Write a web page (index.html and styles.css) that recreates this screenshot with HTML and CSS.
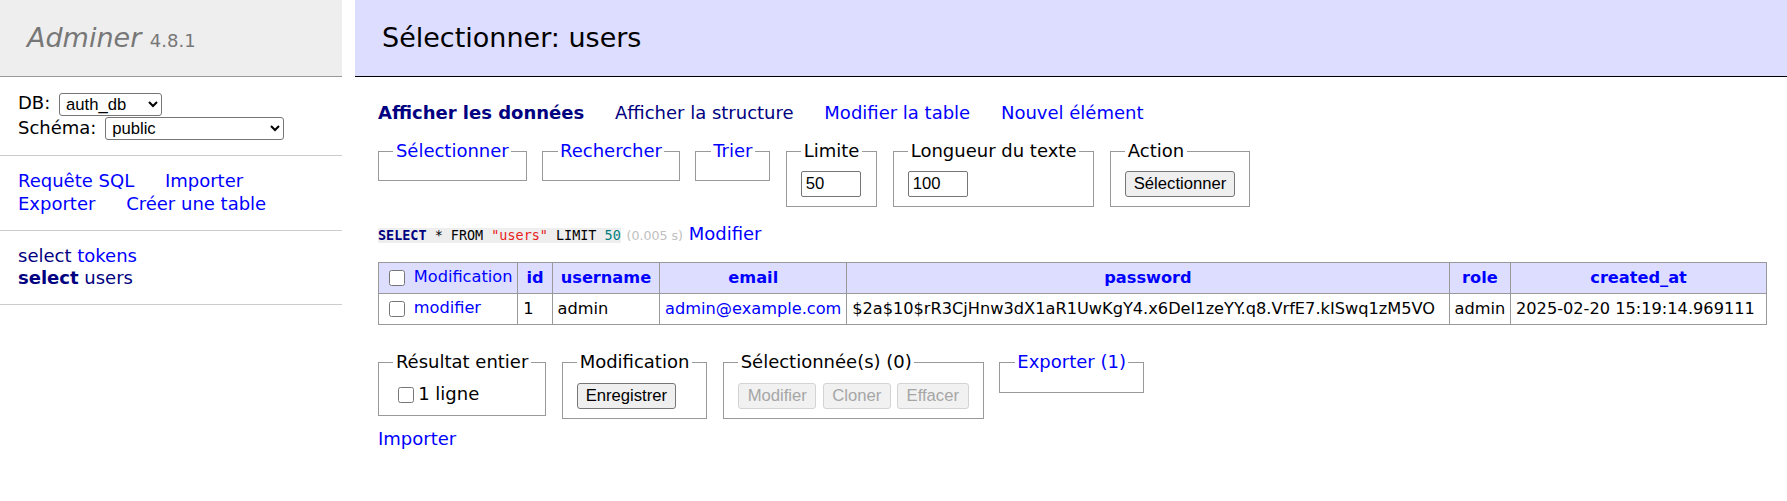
FILE: index.html
```html
<!DOCTYPE html>
<html lang="fr">
<head>
<meta charset="utf-8">
<title>Sélectionner: users - auth_db - Adminer</title>
<link rel="stylesheet" href="styles.css">
</head>
<body>
<div class="page">
  <aside class="menu">
    <h1 class="brand"><a class="brand-link" href="#">Adminer</a> <span class="version">4.8.1</span></h1>
    <p class="menu-block dbs">DB: <select class="sel sel-db"><option>auth_db</option></select><br>Schéma: <select class="sel sel-ns"><option>public</option></select></p>
    <p class="menu-block menu-links"><a href="#">Requête SQL</a> <a href="#">Importer</a><br><a href="#">Exporter</a> <a href="#">Créer une table</a></p>
    <ul class="menu-block tables">
      <li><a class="visited" href="#">select</a> <a href="#">tokens</a></li>
      <li><a class="visited active" href="#">select</a> <a class="visited" href="#">users</a></li>
    </ul>
  </aside>
  <main class="content">
    <h2 class="title">Sélectionner: users</h2>
    <p class="links"><a class="visited active" href="#">Afficher les données</a> <a class="visited" href="#">Afficher la structure</a> <a href="#">Modifier la table</a> <a href="#">Nouvel élément</a></p>
    <form class="filters">
      <fieldset class="fs"><legend class="lg"><a href="#">Sélectionner</a></legend></fieldset>
      <fieldset class="fs"><legend class="lg"><a href="#">Rechercher</a></legend></fieldset>
      <fieldset class="fs"><legend class="lg"><a href="#">Trier</a></legend></fieldset>
      <fieldset class="fs"><legend class="lg">Limite</legend><input class="num" type="text" value="50"></fieldset>
      <fieldset class="fs"><legend class="lg">Longueur du texte</legend><input class="num" type="text" value="100"></fieldset>
      <fieldset class="fs"><legend class="lg">Action</legend><button class="btn" type="button">Sélectionner</button></fieldset>
    </form>
    <p class="query"><code class="sql"><a class="kw" href="#">SELECT</a> * FROM <span class="quo">"users"</span> LIMIT <span class="numlit">50</span></code> <span class="time">(0.005 s)</span> <a href="#">Modifier</a></p>
    <table class="data">
      <thead>
        <tr>
          <td class="w-sel"><input class="cb" type="checkbox"> <a href="#">Modification</a></td>
          <th class="w-id"><a href="#">id</a></th>
          <th class="w-user"><a href="#">username</a></th>
          <th class="w-email"><a href="#">email</a></th>
          <th class="w-pass"><a href="#">password</a></th>
          <th class="w-role"><a href="#">role</a></th>
          <th class="w-date"><a href="#">created_at</a></th>
        </tr>
      </thead>
      <tbody>
        <tr>
          <td><input class="cb" type="checkbox"> <a href="#">modifier</a></td>
          <td>1</td>
          <td>admin</td>
          <td><a href="#">admin@example.com</a></td>
          <td>$2a$10$rR3CjHnw3dX1aR1UwKgY4.x6DeI1zeYY.q8.VrfE7.kISwq1zM5VO</td>
          <td>admin</td>
          <td>2025-02-20 15:19:14.969111</td>
        </tr>
      </tbody>
    </table>
    <div class="footer">
      <fieldset class="fs fs-foot"><legend class="lg">Résultat entier</legend><label class="all"><input class="cb cb-all" type="checkbox">1 ligne</label></fieldset>
      <fieldset class="fs fs-foot"><legend class="lg">Modification</legend><button class="btn" type="button">Enregistrer</button></fieldset>
      <fieldset class="fs fs-foot"><legend class="lg">Sélectionnée(s) (0)</legend><div class="btn-row"><button class="btn" type="button" disabled>Modifier</button><button class="btn" type="button" disabled>Cloner</button><button class="btn" type="button" disabled>Effacer</button></div></fieldset>
      <fieldset class="fs fs-foot"><legend class="lg"><a href="#">Exporter (1)</a></legend></fieldset>
    </div>
    <div class="import"><a href="#">Importer</a></div>
  </main>
</div>
</body>
</html>
```

FILE: styles.css
```css
html {
  background: #fff;
}

body {
  margin: 0;
  color: #000;
  background: #fff;
  font: 18px/1.25 "DejaVu Sans", Verdana, sans-serif;
}

a {
  color: #00f;
  text-decoration: none;
}

a.visited {
  color: #000080;
}

.active {
  font-weight: bold;
}

.page {
  display: flex;
  align-items: flex-start;
  min-height: 501px;
}

/* ---------- sidebar ---------- */
.menu {
  flex: 0 0 342px;
  width: 342px;
}

.brand {
  margin: 0;
  padding: 21px 27px;
  height: 34px;
  font-size: 27px;
  line-height: 34px;
  font-weight: normal;
  color: #777;
  background: #eee;
  border-bottom: 1px solid #999;
}

.brand-link {
  color: #777;
  font-style: italic;
}

.version {
  color: #777;
  font-size: 18px;
  line-height: 1;
}

.menu-block {
  margin: 0;
  padding: 14.4px 18px;
  border-bottom: 1px solid #ccc;
}

.dbs {
  line-height: 24px;
}

.tables {
  list-style: none;
}

.menu-links a {
  margin-right: 25px;
  white-space: nowrap;
}

.sel {
  font: 16.67px "Liberation Sans", Arial, sans-serif;
  height: 23px;
  margin: 0 0 0 3px;
  padding: 0 2px;
  border: 1px solid #767676;
  border-radius: 3px;
  background: #fff;
  color: #000;
  vertical-align: middle;
}

.sel-db {
  width: 103px;
}

.sel-ns {
  width: 179px;
}

/* ---------- content ---------- */
.content {
  flex: 1 1 auto;
  min-width: 0;
  padding: 0 20px 25px 36px;
}

.title {
  margin: 0 -20px 25px -23px;
  padding: 21px 27px;
  font-size: 27px;
  line-height: 34px;
  font-weight: normal;
  color: #000;
  background: #ddf;
  border-bottom: 1px solid #000;
}

.links {
  margin: 0 20px 0 0;
}

.links a {
  margin-right: 25px;
  white-space: nowrap;
}

.filters {
  display: flex;
  align-items: flex-start;
  gap: 15.5px;
  margin: 0;
}

.fs {
  margin: 15.4px 0 0;
  padding: 9px 14.4px;
  border: 1px solid #999;
  min-width: 0;
}

.lg {
  padding: 0 2.5px;
  line-height: 22.5px;
}

.num {
  box-sizing: border-box;
  width: 60px;
  height: 26px;
  margin: 0;
  padding: 1px 3.5px;
  font: 16.67px "Liberation Sans", Arial, sans-serif;
  color: #000;
  border: 1px solid #767676;
  border-radius: 2px;
  background: #fff;
  vertical-align: middle;
}

.btn {
  box-sizing: border-box;
  height: 26px;
  margin: 0;
  padding: 0 7.5px;
  font: 16.67px/20px "Liberation Sans", Arial, sans-serif;
  color: #000;
  background: #efefef;
  border: 1px solid #767676;
  border-radius: 3px;
  vertical-align: middle;
}

.btn:disabled {
  color: #a6a6a6;
  background: #f1f1f1;
  border-color: #d3d3d3;
}

.btn-row {
  display: flex;
  gap: 6.3px;
}

.btn-row .btn {
  padding: 0 8.5px;
}

.query {
  margin: 16px 20px 0 0;
}

.sql {
  font: 13.45px "DejaVu Sans Mono", "Liberation Mono", monospace;
  background: #eee;
  color: #000;
}

.sql .kw {
  color: #000080;
  font-weight: bold;
}

.sql .quo {
  color: #e8201a;
}

.sql .numlit {
  color: #007f7f;
}

.time {
  color: #c0c0c0;
  font-size: 12.6px;
}

/* ---------- table ---------- */
.data {
  margin: 16.2px 0 0;
  border-collapse: collapse;
  font-size: 16.2px;
  line-height: 20.25px;
}

.data td,
.data th {
  box-sizing: border-box;
  border: 1px solid #999;
  padding: 3.24px 4.86px;
  white-space: nowrap;
  text-align: left;
}

.data thead td,
.data thead th {
  background: #ddf;
}

.data thead th {
  text-align: center;
  padding: 3.24px 8.1px;
  font-weight: bold;
}

.data .w-sel { width: 139px; }
.data .w-id { width: 34px; }
.data .w-user { width: 107px; }
.data .w-email { width: 186px; }
.data .w-pass { width: 604px; }
.data .w-role { width: 61px; }
.data .w-date { width: 257px; }

.cb {
  width: 16px;
  height: 16px;
  margin: 3.75px 3.75px 3.75px 5px;
  vertical-align: middle;
}

/* ---------- footer ---------- */
.footer {
  display: flex;
  align-items: flex-start;
  gap: 15.5px;
  padding: 26px 0 9px;
}

.fs-foot {
  margin-top: 0;
}

.all {
  white-space: nowrap;
}

.cb-all {
  margin: 3.75px 3.75px 3.75px 5px;
}

.import {
  margin: 0;
}
```
